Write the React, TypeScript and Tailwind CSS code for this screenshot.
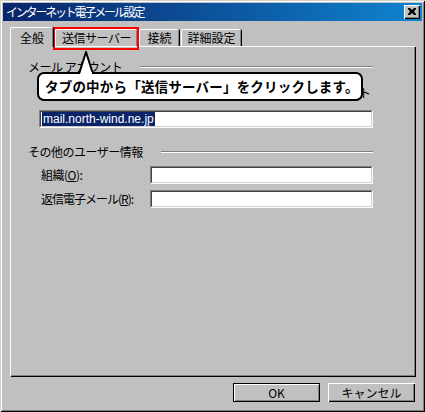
import * as React from 'react';

const jp = '[font-family:"Noto_Sans_CJK_JP",sans-serif]';

function Sunken({ children, className = '' }: { children?: React.ReactNode; className?: string }) {
  return (
    <div className={`border border-t-[#808080] border-l-[#808080] border-b-white border-r-white ${className}`}>
      <div className="h-full border border-t-[#404040] border-l-[#404040] border-b-[#d4d0c8] border-r-[#d4d0c8] bg-white">
        {children}
      </div>
    </div>
  );
}

function GroupHeader({ label }: { label: string }) {
  return (
    <div className="flex items-center gap-[18px]">
      <span className="whitespace-nowrap text-[12px] leading-[14px] tracking-[-0.5px] text-black">{label}</span>
      <div className="h-[2px] flex-1 border-t border-t-[#808080] border-b border-b-white" />
    </div>
  );
}

function Tab({ label, selected = false, className = '' }: { label: string; selected?: boolean; className?: string }) {
  return (
    <div
      className={`relative flex items-center justify-center border-l border-t border-l-white border-t-white rounded-tl-[2px] rounded-tr-[2px] shadow-[inset_-1px_0_#808080,1px_0_#000] text-[12px] text-black ${
        selected ? 'z-10 -mb-px h-[20px] bg-[#c0c0c0]' : 'mt-[2px] h-[17px]'
      } ${className}`}
    >
      {label}
    </div>
  );
}

function Button({ label, isDefault = false }: { label: string; isDefault?: boolean }) {
  return (
    <div
      className={`flex h-[19px] w-[87px] items-center justify-center bg-[#c0c0c0] text-[12px] text-black ${
        isDefault
          ? 'border border-black shadow-[inset_1px_1px_#fff,inset_-1px_-1px_#808080]'
          : 'shadow-[inset_1px_1px_#fff,inset_-1px_-1px_#000,inset_-2px_-2px_#808080]'
      }`}
    >
      {label}
    </div>
  );
}

export default function App() {
  return (
    <div
      className={`relative flex h-[412px] w-[425px] flex-col bg-[#c0c0c0] shadow-[inset_1px_1px_#d4d0c8,inset_-1px_-1px_#000,inset_2px_2px_#fff,inset_-2px_-2px_#808080] ${jp}`}
    >
      {/* title bar */}
      <div className="mx-[3px] mt-[3px] flex h-[18px] items-center justify-between bg-gradient-to-r from-[#0a246a] to-[#1084d0] pl-[3px] pr-[2px]">
        <span className="text-[12px] tracking-[-2.2px] text-white">インターネット電子メール設定</span>
        <div className="flex h-[14px] w-[16px] items-center justify-center bg-[#c0c0c0] shadow-[inset_1px_1px_#fff,inset_-1px_-1px_#000,inset_-2px_-2px_#808080]">
          <svg width="8" height="7" viewBox="0 0 8 7" className="mb-px">
            <path d="M0 0h2l2 2 2-2h2v1L6 3.5 8 6v1H6L4 5 2 7H0V6l2-2.5L0 1z" fill="#000" />
          </svg>
        </div>
      </div>

      {/* tabs */}
      <div className="ml-[10px] mt-[6px] flex h-[19px] items-end gap-[2px]">
        <Tab label="全般" selected className="w-[43px]" />
        <Tab label="送信サーバー" className="w-[82px] tracking-[-0.5px]" />
        <Tab label="接続" className="w-[40px]" />
        <Tab label="詳細設定" className="w-[60px]" />
      </div>

      {/* panel */}
      <div className="mx-[10px] h-[330px] border-l border-t border-l-white border-t-white shadow-[inset_-1px_-1px_#808080,1px_1px_#000] pl-[17px] pr-[42px] pt-[13px]">
        <GroupHeader label="メール アカウント" />
        {/* the line behind the callout; only its last glyph shows */}
        <div className="mt-[12px] flex h-[14px] justify-end text-[12px] leading-[14px] text-black">
          <span className="mr-[2px]">ト</span>
        </div>
        <Sunken className="ml-[11px] mt-[10px] h-[18px]">
          <div className="flex h-full items-center pl-px">
            <span className="bg-[#0a246a] px-px text-[12px] leading-[14px] text-white [font-family:'Liberation_Sans',sans-serif]">
              mail.north-wind.ne.jp
            </span>
          </div>
        </Sunken>

        <div className="mt-[17px]">
          <GroupHeader label="その他のユーザー情報" />
        </div>
        <div className="mt-[7px] flex items-center">
          <span className="w-[122px] pl-[13px] text-[12px] tracking-[-0.5px] text-black">
            組織(<span className="underline">O</span>):
          </span>
          <Sunken className="h-[18px] flex-1" />
        </div>
        <div className="mt-[6px] flex items-center">
          <span className="w-[122px] pl-[13px] text-[12px] tracking-[-1px] text-black">
            返信電子メール(<span className="underline">R</span>):
          </span>
          <Sunken className="h-[18px] flex-1" />
        </div>
      </div>

      {/* buttons */}
      <div className="mr-[10px] mt-[7px] flex justify-end gap-[8px]">
        <Button label="OK" isDefault />
        <Button label="キャンセル" />
      </div>

      {/* highlight around the tab */}
      <div className="absolute left-[53px] top-[27px] h-[23px] w-[86px] border-2 border-[#ff0000]" />

      {/* callout */}
      <div className="absolute left-[37px] top-[72px] flex h-[29px] w-[326px] items-center rounded-[7px] border-2 border-black bg-white pl-[6px]">
        <span className="whitespace-nowrap text-[13.5px] font-bold tracking-[0.2px] text-black">
          タブの中から「送信サーバー」をクリックします。
        </span>
      </div>
      <svg className="absolute left-[78px] top-[51px]" width="18" height="24" viewBox="0 0 18 24">
        <path d="M1 23 L8 1 L15 23" fill="#fff" stroke="#000" strokeWidth="2" strokeLinejoin="round" />
        <rect x="3" y="21" width="11" height="4" fill="#fff" />
      </svg>
    </div>
  );
}
